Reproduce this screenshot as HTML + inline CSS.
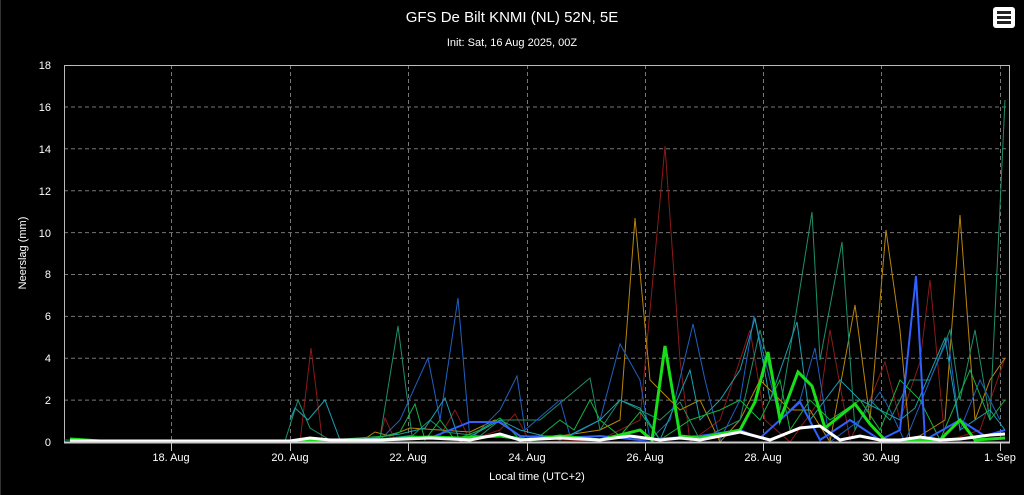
<!DOCTYPE html>
<html><head><meta charset="utf-8"><style>
html,body{margin:0;padding:0;background:#000;width:1024px;height:495px;overflow:hidden}
svg{display:block;font-family:"Liberation Sans",sans-serif}
</style></head><body>
<svg width="1024" height="495" viewBox="0 0 1024 495" xmlns="http://www.w3.org/2000/svg">
<rect width="1024" height="495" fill="#000"/>
<line x1="0.5" y1="0" x2="0.5" y2="495" stroke="#333"/>
<text x="512" y="22" fill="#fff" font-size="15" text-anchor="middle">GFS De Bilt KNMI (NL) 52N, 5E</text>
<text x="512" y="46" fill="#fff" font-size="11" text-anchor="middle">Init: Sat, 16 Aug 2025, 00Z</text>
<g>
<rect x="993" y="7" width="22" height="21" rx="3" fill="#fff"/>
<rect x="997" y="11" width="14" height="3" fill="#222"/>
<rect x="997" y="16" width="14" height="3" fill="#222"/>
<rect x="997" y="21" width="14" height="3" fill="#222"/>
</g>
<g stroke="#777" stroke-dasharray="4,3" stroke-width="1">
<line x1="64" y1="400.1" x2="1010" y2="400.1"/><line x1="64" y1="358.2" x2="1010" y2="358.2"/>
<line x1="64" y1="316.4" x2="1010" y2="316.4"/><line x1="64" y1="274.5" x2="1010" y2="274.5"/>
<line x1="64" y1="232.6" x2="1010" y2="232.6"/><line x1="64" y1="190.7" x2="1010" y2="190.7"/>
<line x1="64" y1="148.8" x2="1010" y2="148.8"/><line x1="64" y1="107" x2="1010" y2="107"/>
<line x1="171.5" y1="65" x2="171.5" y2="442"/><line x1="290.5" y1="65" x2="290.5" y2="442"/>
<line x1="408.5" y1="65" x2="408.5" y2="442"/><line x1="527.5" y1="65" x2="527.5" y2="442"/>
<line x1="645.5" y1="65" x2="645.5" y2="442"/><line x1="763.5" y1="65" x2="763.5" y2="442"/>
<line x1="881.5" y1="65" x2="881.5" y2="442"/><line x1="1000.5" y1="65" x2="1000.5" y2="442"/>
</g>
<rect x="64.5" y="65.5" width="945" height="377" fill="none" stroke="#bbb" stroke-width="1"/>
<g fill="none" stroke-width="1">
<polyline stroke="#8b1a1a" points="290,442 300,442 311,348 322,438 340,442 380,438 385,418 395,440 440,436 455,410 470,440 500,430 515,414 530,442 600,440 640,420 665,146 680,360 690,442 720,420 750,330 765,420 790,442 820,400 830,330 850,440 870,400 885,362 900,420 920,362 930,280 945,442 980,430 1005,358"/>
<polyline stroke="#b8860b" points="360,442 375,432 390,436 410,428 440,430 470,432 495,420 520,436 560,436 600,430 620,420 635,218 650,380 680,410 700,400 720,442 740,420 760,380 790,410 810,410 830,442 855,305 870,420 886,230 900,330 910,442 945,420 960,215 975,420 990,380 1005,358"/>
<polyline stroke="#1e8f6a" points="64,440 120,441 140,441 285,441 298,400 310,428 330,440 380,438 398,326 412,436 430,420 445,432 480,436 500,420 540,420 590,378 600,430 620,400 640,410 660,420 680,402 700,440 740,420 760,330 780,410 795,320 812,212 820,360 842,242 855,430 870,400 890,420 910,380 930,380 950,330 960,400 975,330 990,420 1005,100"/>
<polyline stroke="#2060c0" points="380,440 400,420 428,358 440,420 458,298 470,440 500,410 517,376 525,430 560,400 570,436 600,420 620,344 640,380 650,440 670,420 693,324 705,380 720,440 740,400 754,316 765,360 780,420 800,400 815,348 830,442 860,420 880,392 890,410 905,442 930,380 948,338 960,430 980,380 1000,420"/>
<polyline stroke="#1a9fb0" points="290,420 295,408 308,420 325,400 340,440 360,440 400,434 425,428 445,398 460,442 500,420 520,430 560,440 600,420 620,400 640,408 660,440 690,370 700,420 720,400 740,370 755,318 770,400 797,322 810,420 840,380 860,400 880,410 900,420 915,408 945,338 960,430 990,410 1005,430"/>
<polyline stroke="#16b040" points="70,440 200,441 330,440 385,436 400,432 415,404 425,440 440,420 455,440 480,430 500,418 520,440 540,436 560,420 574,430 590,400 600,420 620,436 640,412 660,440 690,420 720,410 740,400 760,420 780,380 790,430 810,400 830,420 860,400 880,430 900,380 920,400 940,440 970,370 990,420 1005,400"/>
<polyline stroke="#3060ff" stroke-width="2" points="380,440 410,436 430,438 455,428 470,422 500,422 520,436 560,438 600,436 640,440 700,436 740,430 760,438 800,402 820,440 850,420 880,440 900,430 916,276 925,440 960,420 985,436 1005,430"/>
<polyline stroke="#18e018" stroke-width="3" points="70,439 100,441 290,441 330,440 380,440 400,438 430,437 460,438 500,436 530,440 560,436 600,440 640,430 652,440 665,346 680,436 700,438 740,430 755,402 768,352 780,420 798,372 812,386 825,428 855,404 870,424 885,440 910,440 940,440 960,420 975,440 1005,438"/>
<polyline stroke="#ffffff" stroke-width="3" points="70,441 290,441 310,438 330,440 380,440 430,438 470,440 500,434 520,440 560,438 600,440 630,436 660,440 680,438 700,440 720,436 740,432 770,440 800,428 820,426 840,440 860,436 880,440 900,440 920,437 940,440 960,439 990,435 1005,434"/>
</g>
<line x1="64" y1="442.5" x2="1010" y2="442.5" stroke="#ccc" stroke-width="2"/>
<g stroke="#ccc"><line x1="171.5" y1="442" x2="171.5" y2="451"/><line x1="290.5" y1="442" x2="290.5" y2="451"/><line x1="408.5" y1="442" x2="408.5" y2="451"/><line x1="527.5" y1="442" x2="527.5" y2="451"/><line x1="645.5" y1="442" x2="645.5" y2="451"/><line x1="763.5" y1="442" x2="763.5" y2="451"/><line x1="881.5" y1="442" x2="881.5" y2="451"/><line x1="1000.5" y1="442" x2="1000.5" y2="451"/></g>
<g fill="#fff" font-size="11" text-anchor="middle">
<text x="171" y="461">18. Aug</text><text x="290" y="461">20. Aug</text><text x="408" y="461">22. Aug</text><text x="527" y="461">24. Aug</text><text x="645" y="461">26. Aug</text><text x="763" y="461">28. Aug</text><text x="881" y="461">30. Aug</text><text x="1000" y="461">1. Sep</text>
<text x="537" y="480">Local time (UTC+2)</text>
</g>
<g fill="#fff" font-size="11" text-anchor="end">
<text x="51" y="446">0</text><text x="51" y="404">2</text><text x="51" y="362">4</text><text x="51" y="320">6</text><text x="51" y="278">8</text><text x="51" y="237">10</text><text x="51" y="195">12</text><text x="51" y="153">14</text><text x="51" y="111">16</text><text x="51" y="69">18</text>
</g>
<text transform="translate(26,253) rotate(-90)" fill="#fff" font-size="11" text-anchor="middle">Neerslag (mm)</text>
</svg>
</body></html>
